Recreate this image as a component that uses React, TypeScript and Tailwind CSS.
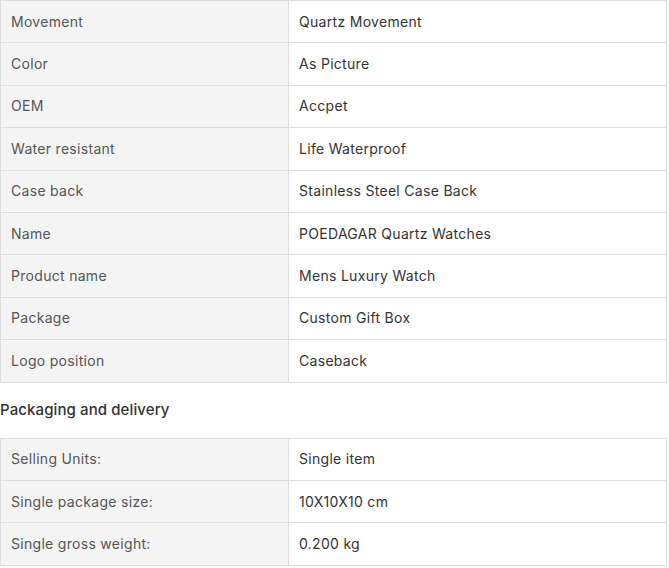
const specs: [string, string][] = [
  ["Movement", "Quartz Movement"],
  ["Color", "As Picture"],
  ["OEM", "Accpet"],
  ["Water resistant", "Life Waterproof"],
  ["Case back", "Stainless Steel Case Back"],
  ["Name", "POEDAGAR Quartz Watches"],
  ["Product name", "Mens Luxury Watch"],
  ["Package", "Custom Gift Box"],
  ["Logo position", "Caseback"],
];

const packaging: [string, string][] = [
  ["Selling Units:", "Single item"],
  ["Single package size:", "10X10X10 cm"],
  ["Single gross weight:", "0.200 kg"],
];

function SpecTable({ rows }: { rows: [string, string][] }) {
  return (
    <div className="w-[667px] border border-[#dddddd]">
      {rows.map(([k, v], i) => (
        <div
          key={k}
          className={`flex h-[41.4px] box-content items-center ${i > 0 ? "border-t border-[#dddddd]" : ""}`}
        >
          <div className="flex h-full w-[288px] items-center border-r border-[#dddddd] bg-[#f4f4f4] pl-[10px] text-[#555555]">
            {k}
          </div>
          <div className="flex h-full flex-1 items-center pl-[10px] text-[#333333]">{v}</div>
        </div>
      ))}
    </div>
  );
}

export default function App() {
  return (
    <div className="w-[669px] bg-white font-['Inter',sans-serif] text-[14px] leading-5 tracking-[0.3px]">
      <SpecTable rows={specs} />
      <h3 className="pb-[19px] pt-[18px] text-[15px] font-medium leading-[18px] tracking-[0.1px] text-[#333333]">
        Packaging and delivery
      </h3>
      <SpecTable rows={packaging} />
    </div>
  );
}
